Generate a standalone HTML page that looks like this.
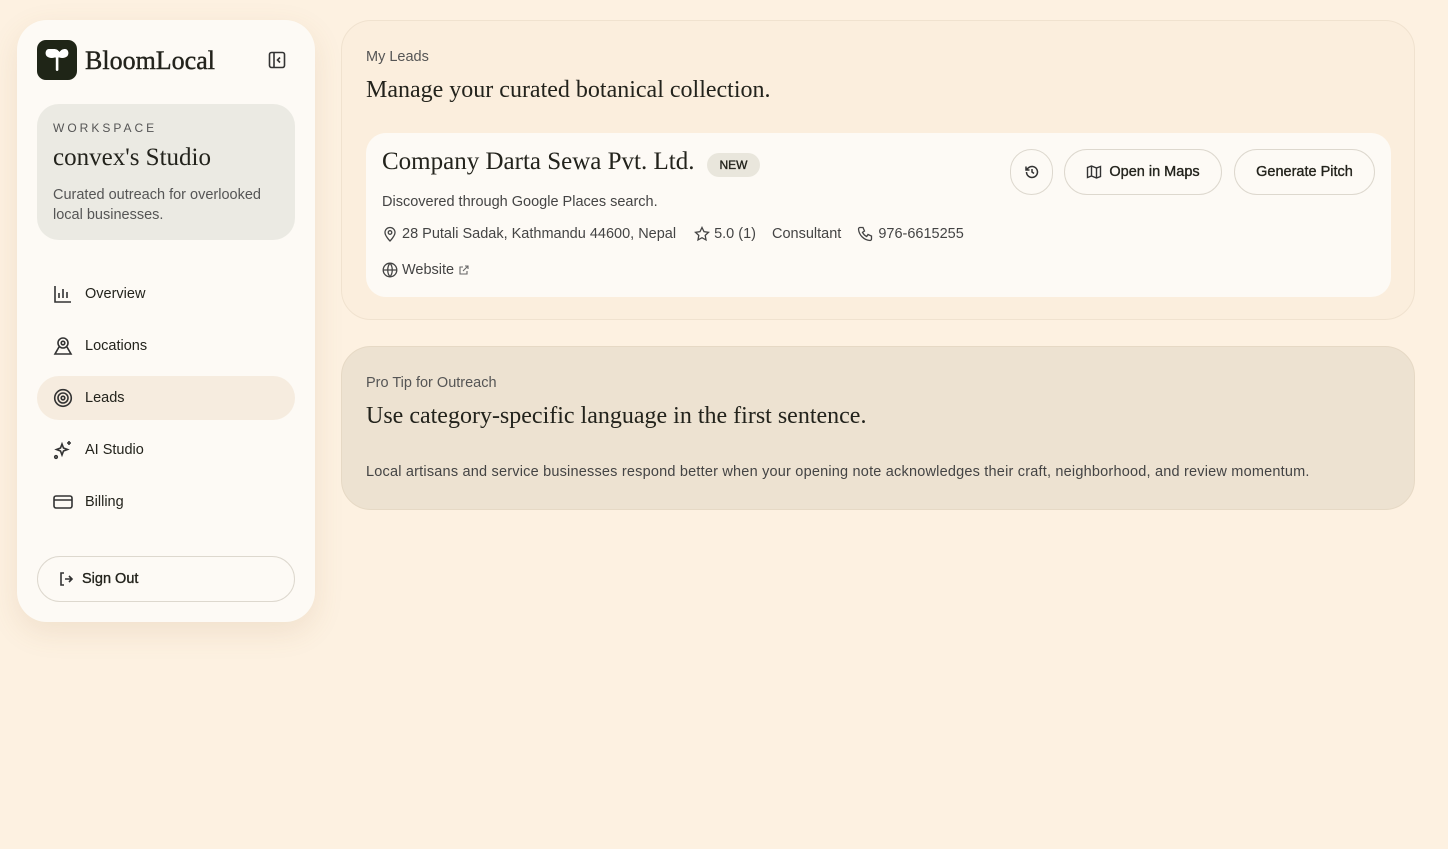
<!DOCTYPE html>
<html><head><meta charset="utf-8"><style>
*{box-sizing:border-box;margin:0;padding:0}
body{width:1448px;height:849px;background:#fdf1e1;font-family:"Liberation Sans",sans-serif;color:#23231c;position:relative;overflow:hidden}
.serif{font-family:"Liberation Serif",serif}
.side{position:absolute;left:17px;top:20px;width:298px;height:602px;background:#fdfaf5;border-radius:30px;box-shadow:0 10px 30px rgba(150,110,60,.12)}
.logo{position:absolute;left:20px;top:20px;width:40px;height:40px;background:#1f2517;border-radius:9px}
.brand{position:absolute;left:68px;top:26px;font-size:26px;-webkit-text-stroke:.4px #23231c}
.ws{position:absolute;left:20px;top:84px;width:258px;height:136px;background:#ebeae3;border-radius:22px;padding:17px 16px}
.ws .l{font-size:12px;letter-spacing:3px;color:#555}
.ws .t{font-size:25px;margin-top:9px}
.ws .d{font-size:14.5px;color:#555;line-height:20px;margin-top:13px}
.nav{position:absolute;left:20px;width:258px;height:44px;border-radius:22px;display:flex;align-items:center;padding-left:16px;font-size:14.5px}
.nav svg{margin-right:12px}
.nav.act{background:#f6ecdf}
.med{-webkit-text-stroke:.35px currentColor}
.so{position:absolute;left:20px;top:536px;width:258px;height:46px;border:1px solid #ddd8ce;border-radius:23px;display:flex;align-items:center;padding-left:20px;font-size:14.5px}
.main{position:absolute;left:341px;top:20px;width:1074px;height:300px;background:#fbeedd;border:1px solid #f0e2cf;border-radius:30px}
.lbl{font-size:14.5px;color:#555}
.card{position:absolute;left:24px;top:112px;width:1025px;height:164px;background:#fdfaf5;border-radius:20px}
.meta{position:absolute;font-size:14.5px;color:#444;display:flex;align-items:center}
.btn{position:absolute;top:16px;height:46px;border:1px solid #ddd8ce;border-radius:23px;display:flex;align-items:center;justify-content:center;font-size:14.5px;color:#23231c;-webkit-text-stroke:.35px #23231c}
.tip{position:absolute;left:341px;top:346px;width:1074px;height:164px;background:#ede2d1;border:1px solid #e6d9c5;border-radius:30px}
</style></head><body>
<div class="side">
 <div class="logo"><svg width="40" height="40" viewBox="0 0 40 40"><path d="M12 9c-3 0-4.5 4-2.5 7 2 2 5.5 2.5 8 1.5h5c2.5 1 6 .5 8-1.5 2-3 .5-7-2.5-7-2.5 0-4 1-5.5 3-1.5-2-3-3-5.5-3-1.5 0-3 0-5 0z" fill="#fff"/><rect x="18.8" y="14" width="2.6" height="17" rx="1.2" fill="#fff"/></svg></div>
 <div class="brand serif">BloomLocal</div>
 <svg style="position:absolute;left:251px;top:31px" width="18" height="18" viewBox="0 0 18 18" fill="none" stroke="#333" stroke-width="1.6"><rect x="1.5" y="1.5" width="15" height="15" rx="2"/><path d="M6 2v14M12 6.5 9.5 9 12 11.5"/></svg>
 <div class="ws"><div class="l">WORKSPACE</div><div class="t serif">convex's Studio</div><div class="d">Curated outreach for overlooked local businesses.</div></div>
 <div class="nav" style="top:252px"><svg width="20" height="20" viewBox="0 0 20 20" fill="none" stroke="#333" stroke-width="1.6"><path d="M2 2v16h16M6 14V9M10 14V5M14 14V8"/></svg>Overview</div>
 <div class="nav" style="top:304px"><svg width="20" height="20" viewBox="0 0 20 20" fill="none" stroke="#333" stroke-width="1.6"><circle cx="10" cy="7" r="5"/><circle cx="10" cy="7" r="1.8"/><path d="M6 11 2 18h16l-4-7"/></svg>Locations</div>
 <div class="nav act" style="top:356px"><svg width="20" height="20" viewBox="0 0 20 20" fill="none" stroke="#333" stroke-width="1.6"><circle cx="10" cy="10" r="8.3"/><circle cx="10" cy="10" r="5"/><circle cx="10" cy="10" r="1.8"/></svg>Leads</div>
 <div class="nav" style="top:408px"><svg width="20" height="20" viewBox="0 0 20 20" fill="none" stroke="#333" stroke-width="1.6"><path d="M9 4l1.5 4 4 1.5-4 1.5L9 15l-1.5-4-4-1.5 4-1.5z"/><path d="M16 1v4M14 3h4"/><circle cx="3" cy="17" r="1.3"/></svg>AI Studio</div>
 <div class="nav" style="top:460px"><svg width="20" height="20" viewBox="0 0 20 20" fill="none" stroke="#333" stroke-width="1.6"><rect x="1" y="4" width="18" height="12" rx="2"/><path d="M1 8h18"/></svg>Billing</div>
 <div class="so"><svg style="margin-right:8px" width="16" height="16" viewBox="0 0 16 16" fill="none" stroke="#333" stroke-width="1.6"><path d="M6 2H3v12h3M7 8h7M11 5l3 3-3 3"/></svg><span class="med">Sign Out</span></div>
</div>
<div class="main">
 <div class="lbl" style="position:absolute;left:24px;top:28px">My Leads</div>
 <div class="serif" style="position:absolute;left:24px;top:56px;font-size:24px">Manage your curated botanical collection.</div>
 <div class="card">
  <div class="serif" style="position:absolute;left:16px;top:15px;font-size:25px">Company Darta Sewa Pvt. Ltd.</div>
  <div style="position:absolute;left:341px;top:20px;width:53px;height:24px;border-radius:12px;background:#e9e6dc;font-size:12px;display:flex;align-items:center;justify-content:center" class="med">NEW</div>
  <div class="meta" style="left:16px;top:61px">Discovered through Google Places search.</div>
  <div class="meta" style="left:16px;top:93px"><svg width="16" height="16" viewBox="0 0 16 16" fill="none" stroke="#444" stroke-width="1.3" style="margin-right:4px"><path d="M8 15s5-5 5-8.5a5 5 0 0 0-10 0C3 10 8 15 8 15z"/><circle cx="8" cy="6.5" r="1.8"/></svg>28 Putali Sadak, Kathmandu 44600, Nepal
   <svg width="16" height="16" viewBox="0 0 16 16" fill="none" stroke="#444" stroke-width="1.3" style="margin:0 4px 0 18px"><path d="M8 1.5l2 4.2 4.5.6-3.3 3.1.8 4.5L8 11.7l-4 2.2.8-4.5L1.5 6.3 6 5.7z"/></svg>5.0 (1)
   <span style="margin-left:16px">Consultant</span>
   <svg width="16" height="16" viewBox="0 0 16 16" fill="none" stroke="#444" stroke-width="1.3" style="margin:0 5px 0 16px"><path d="M3 1.5h3l1.5 3.5-2 1.3a9 9 0 0 0 4.2 4.2l1.3-2 3.5 1.5v3a1.5 1.5 0 0 1-1.5 1.5A12.5 12.5 0 0 1 1.5 3 1.5 1.5 0 0 1 3 1.5z"/></svg>976-6615255</div>
  <div class="meta" style="left:16px;top:129px"><svg width="16" height="16" viewBox="0 0 16 16" fill="none" stroke="#444" stroke-width="1.3" style="margin-right:4px"><circle cx="8" cy="8" r="6.8"/><path d="M1.2 8h13.6M8 1.2c-3 3.5-3 10 0 13.6M8 1.2c3 3.5 3 10 0 13.6"/></svg>Website<svg width="12" height="12" viewBox="0 0 12 12" fill="none" stroke="#666" stroke-width="1.1" style="margin-left:4px"><path d="M9 7v3H2V3h3M7 2h3v3M10 2 5 7"/></svg></div>
  <div class="btn" style="left:644px;width:43px"><svg width="16" height="16" viewBox="0 0 16 16" fill="none" stroke="#333" stroke-width="1.5"><path d="M2.5 8a5.5 5.5 0 1 0 1.6-3.9L2 6M2 2.5V6h3.5M8 5v3l2 1.5"/></svg></div>
  <div class="btn" style="left:698px;width:158px"><svg width="16" height="16" viewBox="0 0 16 16" fill="none" stroke="#333" stroke-width="1.4" style="margin-right:7px"><path d="M1.5 3.5 5.5 2l5 2 4-1.5v10l-4 1.5-5-2-4 1.5zM5.5 2v10M10.5 4v10"/></svg>Open in Maps</div>
  <div class="btn" style="left:868px;width:141px">Generate Pitch</div>
 </div>
</div>
<div class="tip">
 <div class="lbl" style="position:absolute;left:24px;top:28px">Pro Tip for Outreach</div>
 <div class="serif" style="position:absolute;left:24px;top:56px;font-size:24px">Use category-specific language in the first sentence.</div>
 <div style="position:absolute;left:24px;top:117px;font-size:14.5px;color:#444;letter-spacing:.2px">Local artisans and service businesses respond better when your opening note acknowledges their craft, neighborhood, and review momentum.</div>
</div>
</body></html>
